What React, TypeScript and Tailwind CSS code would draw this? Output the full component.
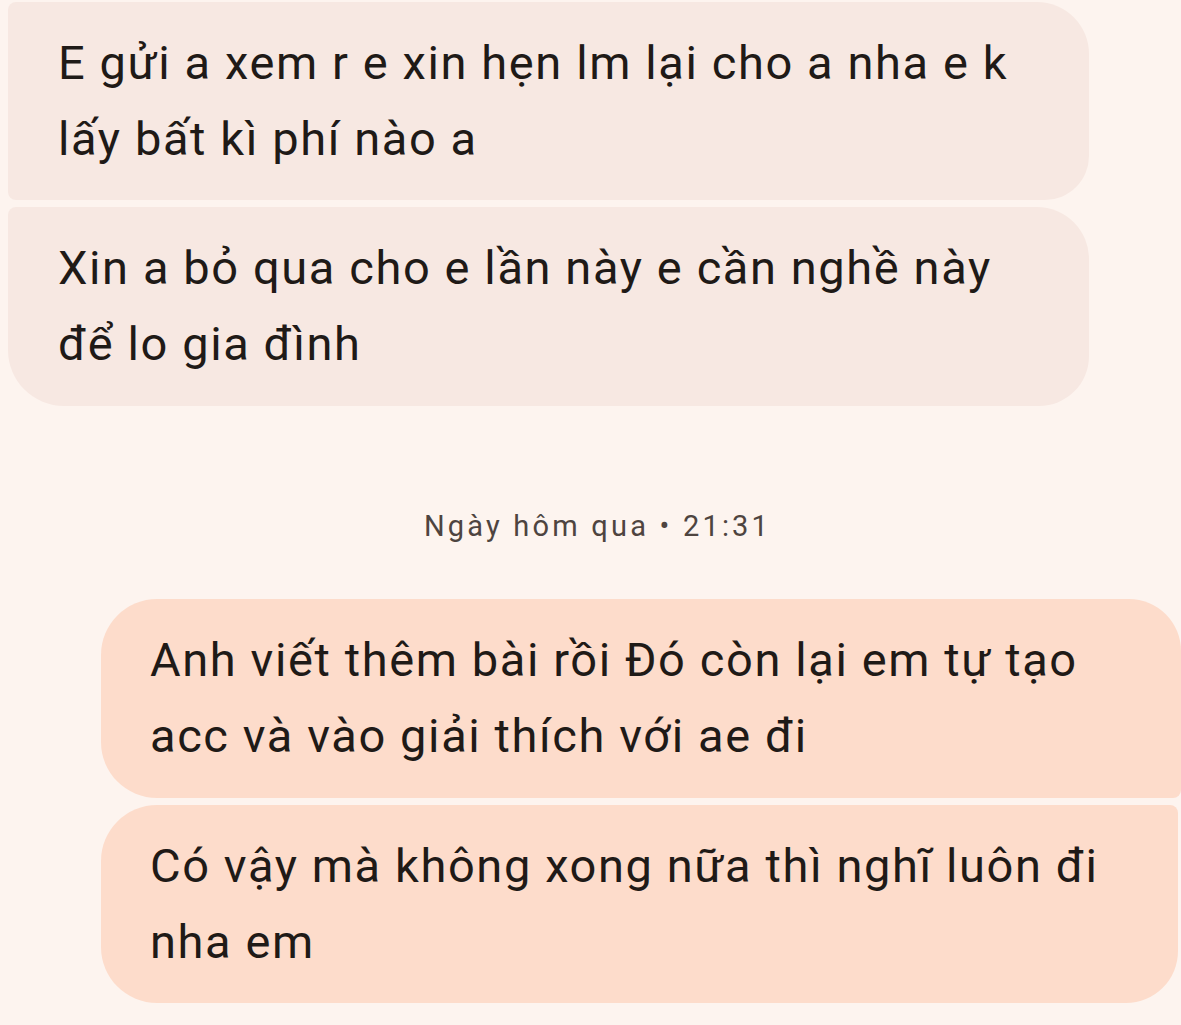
export default function App() {
  return (
    <div className="w-[1181px] h-[1025px] overflow-hidden bg-[#fdf4ef] text-[#1f1a17]" style={{ fontFamily: 'Roboto, "Noto Sans", sans-serif' }}>
      <div className="pt-[2px] pl-2 pr-[92px] flex flex-col gap-[7px]">
        <div className="bg-[#f7e8e2] rounded-tl-[8px] rounded-tr-[52px] rounded-br-[44px] rounded-bl-[8px] pl-[50px] pr-6 pt-[23px] pb-[23px] text-[47px] leading-[76px] tracking-[1.6px] whitespace-nowrap">
          E gửi a xem r e xin hẹn lm lại cho a nha e k<br />lấy bất kì phí nào a
        </div>
        <div className="bg-[#f7e8e2] rounded-tl-[8px] rounded-tr-[52px] rounded-br-[50px] rounded-bl-[56px] pl-[50px] pr-6 pt-[23px] pb-[24px] text-[47px] leading-[76px] tracking-[1.6px] whitespace-nowrap">
          Xin a bỏ qua cho e lần này e cần nghề này<br />để lo gia đình
        </div>
      </div>
      <div className="h-[193px] flex items-center justify-center pl-[14px]">
        <span className="text-[29px] text-[#4e4440] tracking-[3.2px] pt-[48px]">Ngày hôm qua • 21:31</span>
      </div>
      <div className="pl-[101px] flex flex-col gap-[7px]">
        <div className="bg-[#fddccb] rounded-tl-[56px] rounded-tr-[52px] rounded-br-[8px] rounded-bl-[56px] pl-[49px] pr-6 pt-[23px] pb-[24px] text-[47px] leading-[76px] tracking-[1.6px] whitespace-nowrap">
          Anh viết thêm bài rồi Đó còn lại em tự tạo<br />acc và vào giải thích với ae đi
        </div>
        <div className="bg-[#fddccb] mr-[3px] rounded-tl-[56px] rounded-tr-[8px] rounded-br-[52px] rounded-bl-[56px] pl-[49px] pr-6 pt-[23px] pb-[23px] text-[47px] leading-[76px] tracking-[1.6px] whitespace-nowrap">
          Có vậy mà không xong nữa thì nghĩ luôn đi<br />nha em
        </div>
      </div>
    </div>
  );
}
